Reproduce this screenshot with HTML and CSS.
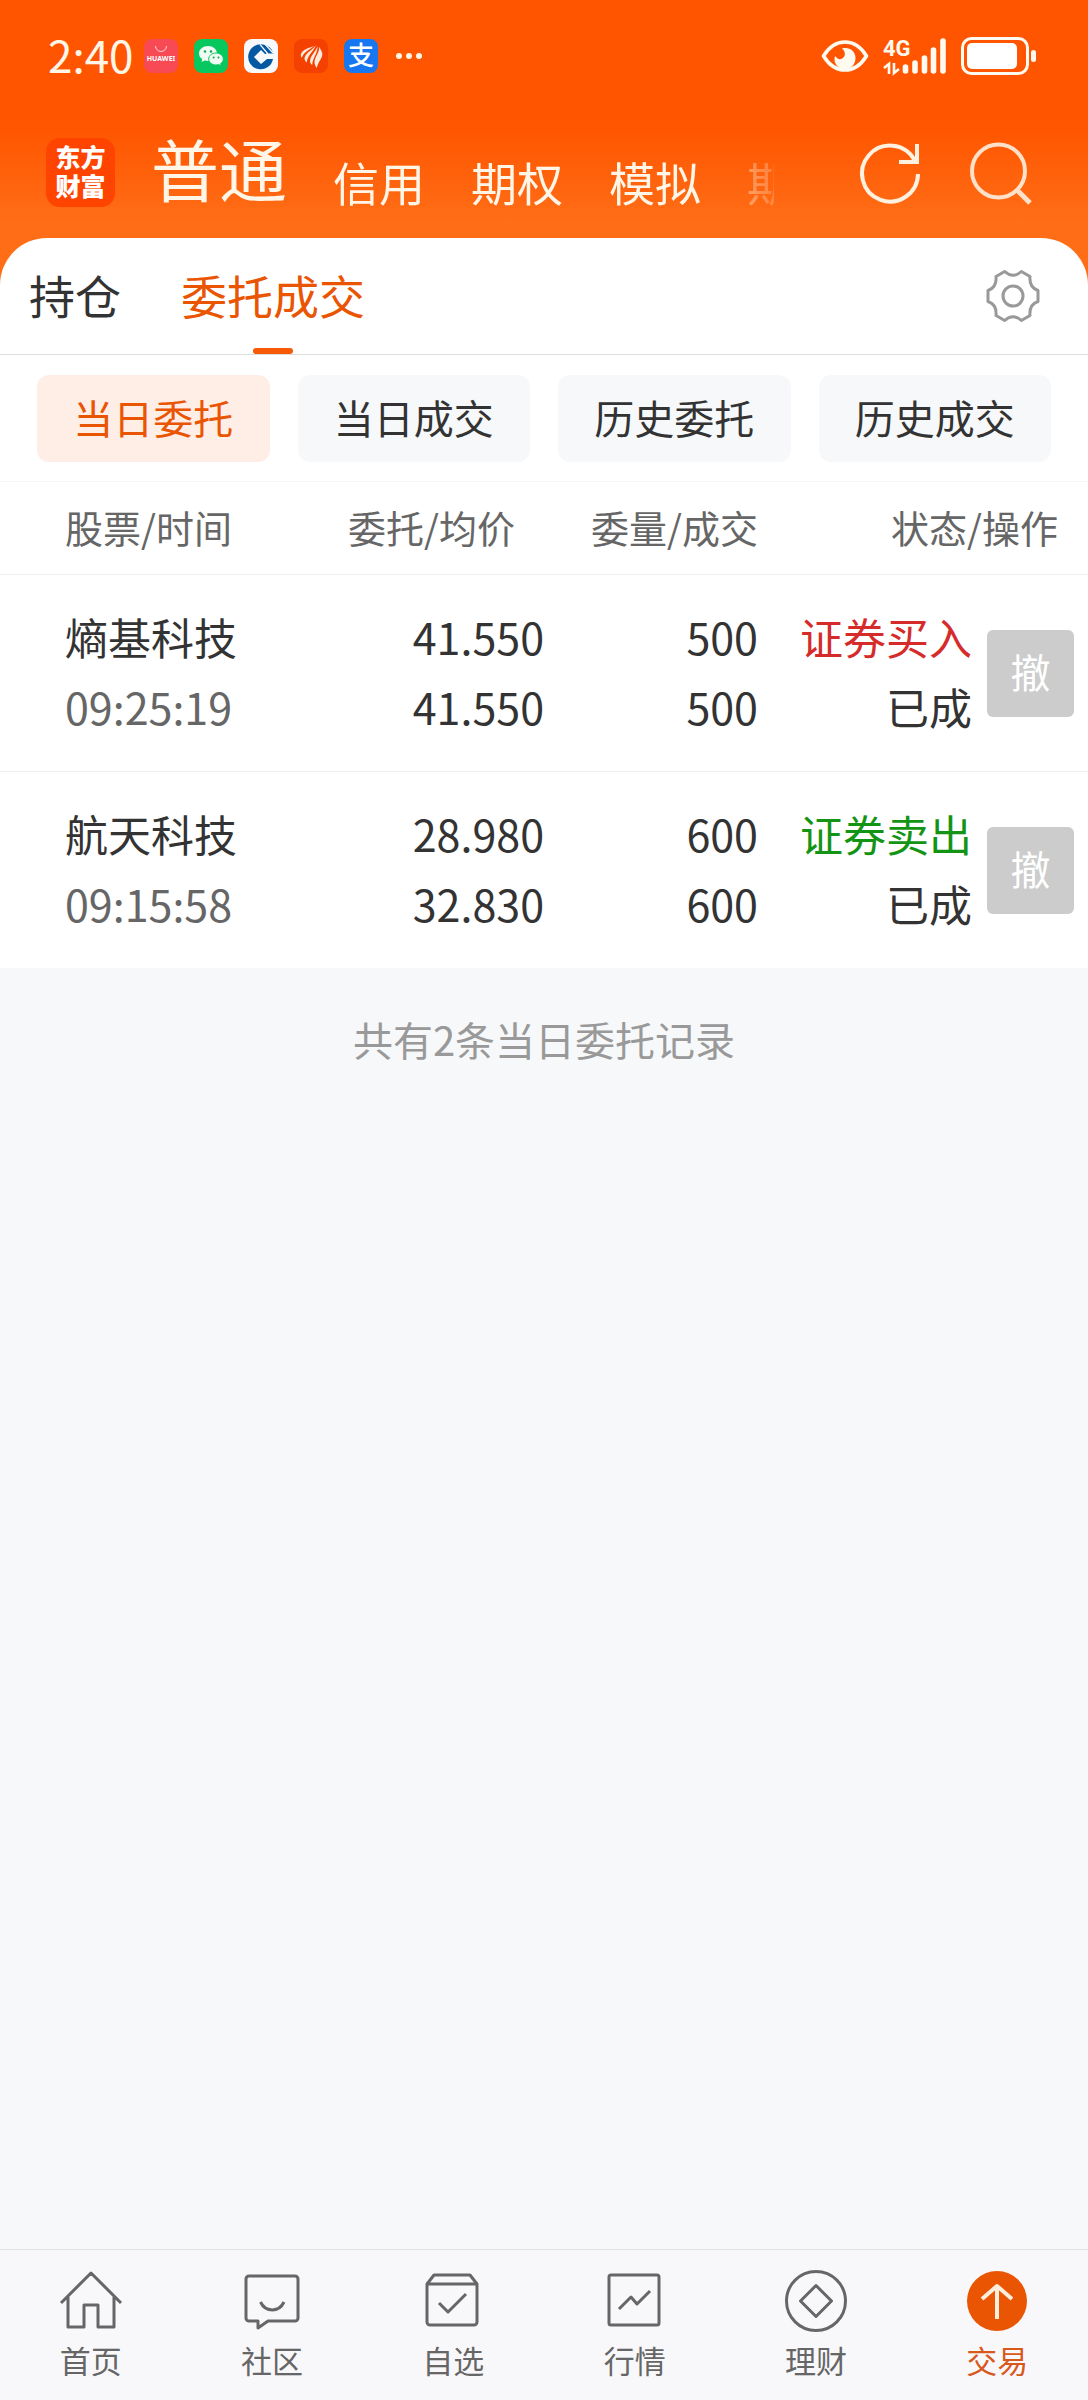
FILE: index.html
```html
<!DOCTYPE html>
<html lang="zh-CN">
<head>
  <meta charset="UTF-8">
  <meta name="viewport" content="width=device-width, initial-scale=1.0">
  <title>委托成交 - 东方财富</title>
  <link rel="stylesheet" href="styles.css">
</head>
<body>
  <header class="top">
    <div class="status-bar">
      <span class="clock">2:40</span>
      <div class="app-icons">
        <svg width="34" height="34" viewBox="0 0 34 34">
          <rect width="34" height="34" rx="8" fill="#f84a55"/>
          <path d="M11.5 7a5.5 5.5 0 0 0 11 0" fill="none" stroke="#ffd9d9" stroke-width="1"/>
          <text class="huawei" x="17" y="22" text-anchor="middle">HUAWEI</text>
        </svg>
        <svg width="34" height="34" viewBox="0 0 34 34">
          <rect width="34" height="34" rx="8" fill="#07c75f"/>
          <path d="M14 7c-5 0-9 3.300-9 7.500 0 2.300 1.300 4.400 3.300 5.700l-.8 2.800 3.200-1.600c1 .3 2.200.5 3.300.5 5 0 9-3.300 9-7.400S19 7 14 7z" fill="#effbf3"/>
          <path d="M22 14c-4.200 0-7.300 2.700-7.300 6s3.100 6 7.300 6c.9 0 1.800-.1 2.600-.4l2.700 1.400-.7-2.400c1.700-1.100 2.700-2.700 2.700-4.600 0-3.300-3.100-6-7.300-6z" fill="#effbf3" stroke="#07c75f"/>
          <g fill="#07a850"><circle cx="11" cy="12.5" r="1.2"/><circle cx="17" cy="12.5" r="1.2"/><circle cx="19.6" cy="18.5" r="1"/><circle cx="24.5" cy="18.5" r="1"/></g>
        </svg>
        <svg width="34" height="34" viewBox="0 0 34 34">
          <rect width="34" height="34" rx="8" fill="#f7f9fb"/>
          <path d="M19 5.500A12.500 12.500 0 1 0 29 20h-6L17 25l-7-7 7-7 4 4h8.500A12.500 12.500 0 0 0 19 5.500z" fill="#0559a3"/>
          <path d="M16 5.500l8 9.500M20 4l9 10" stroke="#f7f9fb" stroke-width="1.200"/>
          <path d="M22 14.500h8v4h-8z" fill="#f7f9fb"/>
          <path d="M17 12l6 6-6 6-6-6z" fill="#f7f9fb"/>
        </svg>
        <svg width="34" height="34" viewBox="0 0 34 34">
          <rect width="34" height="34" rx="8" fill="#f44000"/>
          <g fill="#ffeadb">
            <path d="M20 7c-5 2-11 3-13 8-.5 1.500 0 3 .8 3.800C10 13 15 11 20 7z"/>
            <path d="M22 6c-3 5-10 7-11.500 13 0 2 1 3.500 2.200 4.500C13.500 16 20 12 22 6z"/>
            <path d="M23.500 7c-1 5-7 9-7.500 15 0 2 1 3 2.200 4C18.500 19 24 14 23.500 7z"/>
            <path d="M25 8c1 5-4 9-4.500 15 0 2.500 1 4.500 2.500 6 0-6 8-11 4.500-17C26.500 10 26 9 25 8z"/>
          </g>
        </svg>
        <svg width="34" height="34" viewBox="0 0 34 34">
          <rect width="34" height="34" rx="8" fill="#1677f0"/>
          <text class="alipay" x="17" y="26" text-anchor="middle">支</text>
        </svg>
        <svg width="28" height="34" viewBox="0 0 28 34">
          <g fill="#fff6e8"><circle cx="5" cy="17" r="3"/><circle cx="15" cy="17" r="3"/><circle cx="25" cy="17" r="3"/></g>
        </svg>
      </div>
      <div class="system-icons">
        <svg width="48" height="34" viewBox="0 0 48 34">
          <path d="M2.500 17C8 8 15 3 24 3s16 5 21.500 14C40 26 33 31 24 31S8 26 2.500 17z" fill="none" stroke="#fffaf0" stroke-width="3.600" stroke-linejoin="round"/>
          <path d="M21 9.500c7-2 13.500 2.500 13.500 9.500S29.500 30 24 30s-10.500-4-10.500-9.500c0-1.500.3-2.500.8-3.500 1.500 3 4.500 4 7 2.500 3.500-2 3.500-7-.3-10z" fill="#fffaf0"/>
        </svg>
        <svg width="64" height="36" viewBox="0 0 64 36">
          <text class="signal" x="0" y="18">4G</text>
          <path d="M6 36V26l-5 4M11 25v10l5-4" stroke="#fffaf0" stroke-width="2.600" fill="none"/>
          <path d="M22.500 29v4M32 25v8M41.500 20v13M50.500 12v21M60 3v30" stroke="#fffaf0" stroke-width="5.600" stroke-linecap="round"/>
        </svg>
        <svg width="76" height="38" viewBox="0 0 76 38">
          <rect x="1.500" y="1.500" width="65" height="35" rx="9" fill="none" stroke="#fffaf0" stroke-width="3"/>
          <rect x="6" y="6" width="50" height="26" rx="5" fill="#fff"/>
          <rect x="70" y="13" width="5" height="12" rx="2.500" fill="#fffaf0"/>
        </svg>
      </div>
    </div>

    <div class="app-bar">
      <a href="#" class="logo">东方<br>财富</a>
      <nav class="accounts">
        <a href="#" class="current">普通</a>
        <a href="#">信用</a>
        <a href="#">期权</a>
        <a href="#">模拟</a>
        <a href="#">期货</a>
      </nav>
      <button class="icon-button" aria-label="刷新">
        <svg width="62" height="62" viewBox="0 0 62 62" fill="none" stroke="#fff1df" stroke-width="4">
          <path d="M58 32A28 28 0 1 1 54.500 18"/>
          <path d="M57 2v18H39"/>
        </svg>
      </button>
      <button class="icon-button" aria-label="搜索">
        <svg width="62" height="62" viewBox="0 0 62 62" fill="none" stroke="#ffe0c8" stroke-width="4">
          <circle cx="28.500" cy="29" r="26.500"/>
          <path d="M47 48l13 13" stroke-width="5"/>
        </svg>
      </button>
    </div>
  </header>

  <main>
    <div class="tabs">
      <a href="#">持仓</a>
      <a href="#" class="active">委托成交</a>
      <button class="icon-button settings" aria-label="设置">
        <svg width="54" height="54" viewBox="-1 -1 54 54" fill="none" stroke="#999" stroke-width="3" stroke-linejoin="round">
          <path d="M17.700 1.500Q26 9 34.300 1.500L43 6.500Q42 17.500 51 20.500V31.500Q42 34.500 43 45.500L34.300 50.500Q26 43 17.700 50.500L9 45.500Q10 34.500 1 31.500V20.500Q10 17.500 9 6.500Z"/>
          <circle cx="26" cy="26" r="10"/>
        </svg>
      </button>
    </div>

    <div class="filters">
      <button class="active">当日委托</button>
      <button>当日成交</button>
      <button>历史委托</button>
      <button>历史成交</button>
    </div>

    <table class="orders">
      <colgroup>
        <col>
        <col class="col-price">
        <col class="col-amount">
        <col class="col-status">
        <col class="col-action">
      </colgroup>
      <thead>
        <tr>
          <th>股票/时间</th>
          <th class="price">委托/均价</th>
          <th>委量/成交</th>
          <th colspan="2" class="status">状态/操作</th>
        </tr>
      </thead>
      <tbody>
        <tr>
          <td>熵基科技<br><span class="time">09:25:19</span></td>
          <td>41.550<br>41.550</td>
          <td>500<br>500</td>
          <td><span class="buy">证券买入</span><br>已成</td>
          <td><button class="cancel">撤</button></td>
        </tr>
        <tr>
          <td>航天科技<br><span class="time">09:15:58</span></td>
          <td>28.980<br>32.830</td>
          <td>600<br>600</td>
          <td><span class="sell">证券卖出</span><br>已成</td>
          <td><button class="cancel">撤</button></td>
        </tr>
      </tbody>
    </table>
    <p class="total">共有2条当日委托记录</p>
  </main>

  <nav class="bottom-nav">
    <a href="#">
      <svg width="62" height="62" viewBox="0 0 62 62">
        <path d="M1 33L31 3l30 30M8 27v30h16V35h14v22h16V27"/>
      </svg>
      首页
    </a>
    <a href="#">
      <svg width="62" height="62" viewBox="0 0 62 62">
        <path d="M8 6h46a3 3 0 0 1 3 3v39a3 3 0 0 1-3 3H27l-10 7v-7H8a3 3 0 0 1-3-3V9a3 3 0 0 1 3-3z"/>
        <path d="M19.500 32c5 10.500 18.500 10.500 23.500 0"/>
      </svg>
      社区
    </a>
    <a href="#">
      <svg width="62" height="62" viewBox="0 0 62 62">
        <path d="M5 14l7-9h36l7 9v38a3 3 0 0 1-3 3H8a3 3 0 0 1-3-3zM5 14h50M17 33l9 9 18-18"/>
      </svg>
      自选
    </a>
    <a href="#">
      <svg width="62" height="62" viewBox="0 0 62 62">
        <rect x="5" y="5" width="50" height="50" rx="2"/>
        <path d="M15 39l12-12 6 7 13-13"/>
      </svg>
      行情
    </a>
    <a href="#">
      <svg width="62" height="62" viewBox="0 0 62 62">
        <circle cx="31" cy="31" r="29.500"/>
        <path d="M31 15.500L46.500 31 31 46.500 15.500 31z"/>
      </svg>
      理财
    </a>
    <a href="#" class="active">
      <svg width="62" height="62" viewBox="0 0 62 62">
        <circle class="disc" cx="31" cy="31" r="30"/>
        <path class="arrow" d="M31 49V17M16 29l15-13 15 13"/>
      </svg>
      交易
    </a>
  </nav>
</body>
</html>
```

FILE: styles.css
```css
/* Base */
* {
  box-sizing: border-box;
}
body {
  margin: 0;
  min-height: 100vh;
  display: flex;
  flex-direction: column;
  font-family: 'Noto Sans CJK SC', sans-serif;
  background-color: #f7f8fa;
  color: #333;
}
a {
  color: inherit;
  text-decoration: none;
}
button {
  padding: 0;
  border: none;
  background: none;
  font: inherit;
  color: inherit;
  cursor: pointer;
}
svg {
  display: block;
  flex-shrink: 0;
  overflow: visible;
}

/* Orange top area, runs on under the rounded panel */
.top {
  padding-bottom: 52px;
  background: linear-gradient(#ff5500 125px, #ff6e17 225px);
  color: #fff6e8;
}
.status-bar {
  display: flex;
  align-items: center;
  height: 112px;
  padding: 0 51px 0 48px;
}
.clock {
  padding-bottom: 4px;
  font-size: 44px;
  line-height: 44px;
}
.app-icons {
  display: flex;
  gap: 16px;
  margin-left: 10px;
}
.huawei {
  font: 700 7px 'Noto Sans', sans-serif;
  fill: #fff;
}
.alipay {
  font-size: 26px;
  font-weight: 500;
  fill: #fff;
}
.system-icons {
  display: flex;
  align-items: center;
  gap: 14px;
  margin-left: auto;
}
.signal {
  font: 700 22px Roboto, sans-serif;
  fill: #fffaf0;
}
.app-bar {
  display: flex;
  align-items: center;
  height: 121px;
  padding: 0 56px 0 46px;
}
.logo {
  width: 69px;
  height: 69px;
  padding-top: 4px;
  border-radius: 14px;
  background-color: #ff4400;
  color: #fff;
  font-size: 25px;
  font-weight: 900;
  line-height: 29px;
  text-align: center;
}
.accounts {
  flex: 1;
  min-width: 0;
  display: flex;
  align-items: flex-end;
  gap: 46px;
  margin: 0 86px 0 36px;
  padding-bottom: 8px;
  overflow: hidden;
  white-space: nowrap;
  font-size: 46px;
  line-height: 1.15;
  -webkit-mask-image: linear-gradient(to left, rgba(0,0,0,0.2), rgba(0,0,0,0.5) 40px, #000 60px);
  mask-image: linear-gradient(to left, rgba(0,0,0,0.2), rgba(0,0,0,0.5) 40px, #000 60px);
}
.accounts .current {
  font-size: 68px;
}
.icon-button + .icon-button {
  margin-left: 48px;
}

/* Tabs */
.tabs {
  display: flex;
  align-items: center;
  gap: 60px;
  height: 117px;
  margin-top: -47px;
  padding: 0 48px 0 29px;
  border-bottom: 1px solid #ddd;
  border-radius: 47px 47px 0 0;
  background-color: #fff;
  font-size: 46px;
  line-height: 112px;
}
.tabs a {
  padding-bottom: 4px;
}
.tabs .active {
  position: relative;
  color: #ea5504;
}
.tabs .active::after {
  content: '';
  position: absolute;
  left: 50%;
  bottom: 0;
  width: 40px;
  height: 6px;
  margin-left: -20px;
  border-radius: 3px;
  background-color: #f75a06;
}
.settings {
  margin-left: auto;
}

/* Filters */
.filters {
  display: flex;
  gap: 28px;
  padding: 20px 37px 19px;
  border-bottom: 1px solid #f5f5f5;
  background-color: #fff;
}
.filters button {
  flex: 1;
  height: 87px;
  padding-bottom: 4px;
  border-radius: 12px;
  background-color: #f7f8fa;
  font-size: 40px;
}
.filters .active {
  background-color: #ffeee6;
  color: #ea5504;
}

/* Orders */
.orders {
  width: 100%;
  table-layout: fixed;
  border-spacing: 0;
  background-color: #fff;
  text-align: right;
}
.col-price {
  width: 240px;
}
.col-amount,
.col-status {
  width: 214px;
}
.col-action {
  width: 116px;
}
.orders th {
  height: 93px;
  padding: 0 0 4px;
  border-bottom: 1px solid #eee;
  color: #666;
  font-size: 38px;
  font-weight: 400;
}
.orders td {
  padding: 26px 0 30px;
  font-size: 43px;
  line-height: 70px;
}
.orders tr:not(:last-child) td {
  border-bottom: 1px solid #eee;
}
.orders th:first-child,
.orders td:first-child {
  padding-left: 65px;
  text-align: left;
}
.orders .price {
  padding-right: 29px;
}
.orders .status {
  padding-right: 30px;
}
.orders td:last-child {
  padding: 28px 14px 28px 0;
}
.time {
  color: #666;
}
.buy {
  color: #d62b2b;
}
.sell {
  color: #149414;
}
.cancel {
  display: block;
  width: 87px;
  height: 87px;
  margin-left: auto;
  padding-bottom: 4px;
  border-radius: 6px;
  background-color: #ccc;
  color: #fff;
  font-size: 40px;
}
.total {
  margin: 41px 0;
  color: #999;
  font-size: 40px;
  line-height: 60px;
  text-align: center;
}

/* Bottom navigation */
.bottom-nav {
  display: flex;
  height: 151px;
  margin-top: auto;
  padding-top: 20px;
  border-top: 1px solid #dfe2e6;
  background-color: #f8f8fb;
  color: #666;
  font-size: 31px;
  line-height: 44px;
}
.bottom-nav a {
  flex: 1;
  display: flex;
  flex-direction: column;
  align-items: center;
  gap: 6px;
}
.bottom-nav svg {
  fill: none;
  stroke: #666;
  stroke-width: 3px;
  stroke-linejoin: round;
}
.bottom-nav .active {
  color: #d8591b;
}
.bottom-nav .disc {
  fill: #ea5504;
  stroke: none;
}
.bottom-nav .arrow {
  stroke: #ffeedd;
  stroke-width: 4px;
}
```
